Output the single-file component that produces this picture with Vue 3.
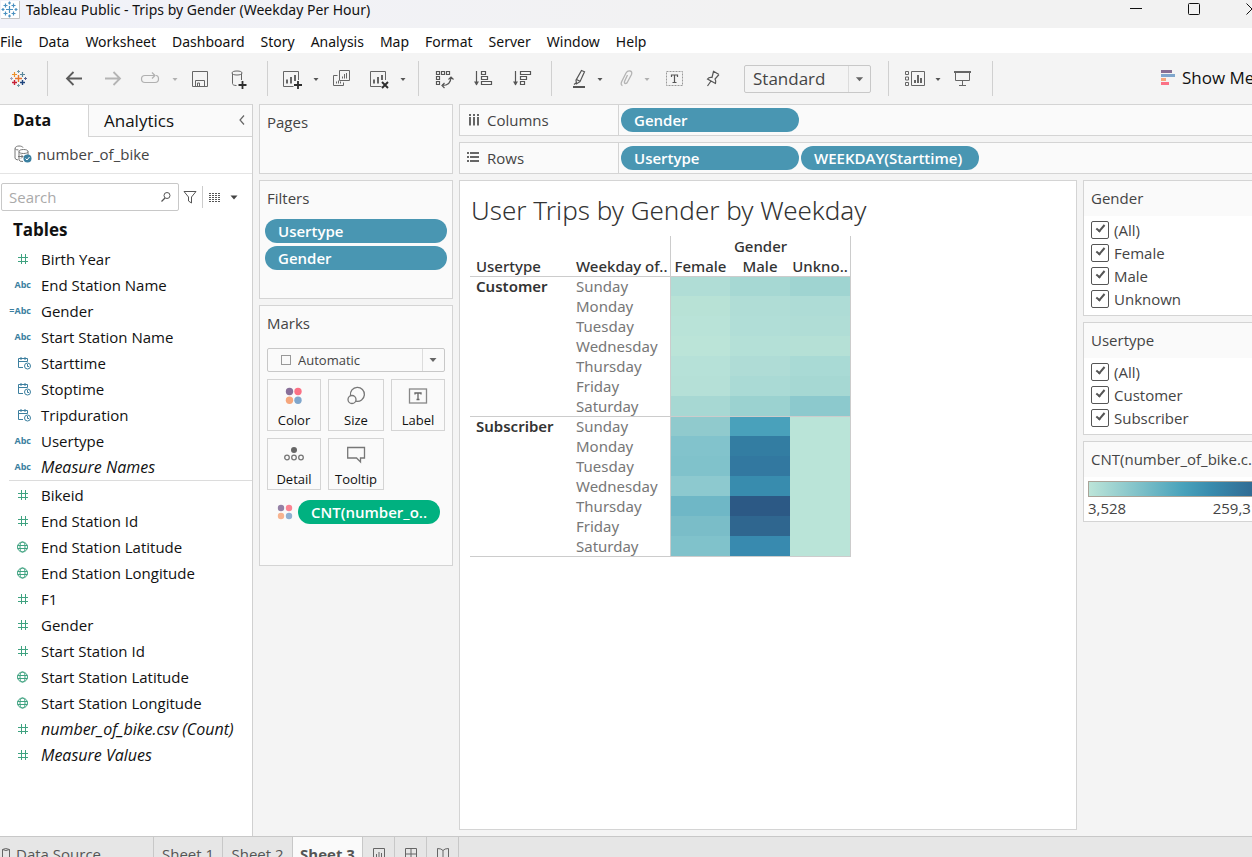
<script setup>
import { ref } from 'vue'

const menus = ['File', 'Data', 'Worksheet', 'Dashboard', 'Story', 'Analysis', 'Map', 'Format', 'Server', 'Window', 'Help']

const dimensions = [
  { name: 'Birth Year', icon: 'num' },
  { name: 'End Station Name', icon: 'abc' },
  { name: 'Gender', icon: 'calc' },
  { name: 'Start Station Name', icon: 'abc' },
  { name: 'Starttime', icon: 'date' },
  { name: 'Stoptime', icon: 'date' },
  { name: 'Tripduration', icon: 'date' },
  { name: 'Usertype', icon: 'abc' },
  { name: 'Measure Names', icon: 'abc', italic: true }
]
const measures = [
  { name: 'Bikeid', icon: 'num' },
  { name: 'End Station Id', icon: 'num' },
  { name: 'End Station Latitude', icon: 'geo' },
  { name: 'End Station Longitude', icon: 'geo' },
  { name: 'F1', icon: 'num' },
  { name: 'Gender', icon: 'num' },
  { name: 'Start Station Id', icon: 'num' },
  { name: 'Start Station Latitude', icon: 'geo' },
  { name: 'Start Station Longitude', icon: 'geo' },
  { name: 'number_of_bike.csv (Count)', icon: 'num', italic: true },
  { name: 'Measure Values', icon: 'num', italic: true }
]
const fieldGroups = [dimensions, measures]

const groups = [
  {
    name: 'Customer',
    days: [
      ['Sunday', '#b0ddd6', '#a6d8d3', '#9fd4d1'],
      ['Monday', '#b8e2d6', '#b0ddd6', '#aedcd6'],
      ['Tuesday', '#b9e3d8', '#b1ded7', '#b0ddd6'],
      ['Wednesday', '#bbe4d8', '#b4e0d7', '#b5e0d6'],
      ['Thursday', '#b6e1d8', '#afdcd6', '#a9dad5'],
      ['Friday', '#b5e0d7', '#aadad5', '#a6d8d3'],
      ['Saturday', '#a7d8d3', '#9bd2d0', '#8cc9cd']
    ]
  },
  {
    name: 'Subscriber',
    days: [
      ['Sunday', '#90cacd', '#49a1bb', '#bae4d8'],
      ['Monday', '#82c3cc', '#337da2', '#bae4d8'],
      ['Tuesday', '#80c2cb', '#3278a0', '#bae4d8'],
      ['Wednesday', '#8dc9cf', '#388cae', '#bae4d8'],
      ['Thursday', '#6fb7c6', '#2c5985', '#bae4d8'],
      ['Friday', '#7abdc8', '#2f668f', '#bae4d8'],
      ['Saturday', '#80c2cb', '#388aaf', '#bae4d8']
    ]
  }
]

const filterCards = ref([
  { title: 'Gender', items: ['(All)', 'Female', 'Male', 'Unknown'] },
  { title: 'Usertype', items: ['(All)', 'Customer', 'Subscriber'] }
])
const search = ref('')
</script>

<template>
  <div class="app">
    <header class="titlebar">
      <svg class="applogo" width="20" height="20" viewBox="0 0 20 20" aria-hidden="true">
        <rect x="1" y="1" width="18" height="17" fill="#fff" />
        <path d="M1 18.500h18.500V1" fill="none" stroke="#c4c4c4" />
        <path d="M9.500 6v7M6 9.500h7M5.500 3.500v4M3.500 5.500h4M13.500 3.500v4M11.500 5.500h4M5.500 11.500v4M3.500 13.500h4M13.500 11.500v4M11.500 13.500h4M9.500 1.500v3M8 3h3M9.500 14.500v3M8 16h3M3 8v3M1.500 9.500h3M16 8v3M14.500 9.500h3" stroke="#4a90c0" stroke-width="1.200" fill="none" />
      </svg>
      <h1>Tableau Public - Trips by Gender (Weekday Per Hour)</h1>
      <div class="wincontrols">
        <button aria-label="Minimize"><svg width="12" height="12" viewBox="0 0 12 12"><path d="M0 5.500h12" stroke="#111" /></svg></button>
        <button aria-label="Maximize"><svg width="12" height="12" viewBox="0 0 12 12"><rect x=".5" y=".5" width="11" height="11" rx="1" fill="none" stroke="#111" /></svg></button>
        <button aria-label="Close"><svg width="12" height="12" viewBox="0 0 12 12"><path d="M.5.5l11 11M11.500.5l-11 11" stroke="#111" /></svg></button>
      </div>
    </header>

    <nav class="menubar">
      <button v-for="m in menus" :key="m">{{ m }}</button>
    </nav>

    <div class="toolbar">
      <div class="tgroup tlogo">
        <button aria-label="Start page">
          <svg width="24" height="24" viewBox="0 0 24 24" fill="none">
            <path d="M11.500 8v7M8 11.500h7" stroke="#e8762c" stroke-width="1.400" />
            <path d="M7.500 5v5M5 7.500h5" stroke="#eb912b" stroke-width="1.200" />
            <path d="M15.500 5v5M13 7.500h5" stroke="#59879b" stroke-width="1.200" />
            <path d="M7.500 13v5M5 15.500h5" stroke="#c72035" stroke-width="1.400" />
            <path d="M15.500 13v5M13 15.500h5" stroke="#1f457e" stroke-width="1.400" />
            <path d="M11.500 3v3M10 4.500h3" stroke="#7199a6" />
            <path d="M11.500 17v3M10 18.500h3" stroke="#7199a6" />
            <path d="M4.500 10v3M3 11.500h3" stroke="#a0a0b8" />
            <path d="M18.500 10v3M17 11.500h3" stroke="#5b6591" />
          </svg>
        </button>
      </div>
      <div class="tgroup">
        <button aria-label="Undo"><svg width="24" height="24" viewBox="0 0 24 24"><path d="M20 11.500H5M11.500 5L5 11.500l6.500 6.500" stroke="#5c5c5c" stroke-width="1.800" /></svg></button>
        <button aria-label="Redo" disabled><svg width="24" height="24" viewBox="0 0 24 24"><path d="M4 11.500h15M12.500 5l6.500 6.500-6.500 6.500" stroke="#b4b4b4" stroke-width="1.800" /></svg></button>
        <button aria-label="Replay" disabled><svg width="24" height="24" viewBox="0 0 24 24"><path d="M7 15.500H5q-3.500 0-3.500-3.500t3.500-3.500h10M12 5.500l3 3-3 3M16 8.500q2.500 0 2.500 3.500t-3.500 3.500H7" stroke="#b0b0b0" stroke-width="1.200" /></svg></button>
        <button class="caret" aria-label="Replay options" disabled><svg width="10" height="10" viewBox="0 0 10 10"><path d="M2.500 4h5L5 7z" fill="#b0b0b0" /></svg></button>
        <button aria-label="Save"><svg width="24" height="24" viewBox="0 0 24 24"><path d="M4.500 4.500h15v15h-15zM7.500 19.500v-6h9v6M9.500 19v-3h2v3" stroke="#666" /></svg></button>
        <button aria-label="New data source"><svg width="24" height="24" viewBox="0 0 24 24"><path d="M5 6c0-1.300 2-2 5-2s5 .7 5 2-2 2-5 2-5-.7-5-2zM5.500 6.500v10c0 1.300 1.500 2 4 2M14.500 6.500V13" stroke="#666" /><path d="M15.500 14v8M11.500 18h8" stroke="#2d2d2d" stroke-width="1.800" /></svg></button>
      </div>
      <div class="tgroup g-sheet">
        <button aria-label="New worksheet"><svg width="24" height="24" viewBox="0 0 24 24"><path d="M12.500 19.500h-10v-15h15V13" stroke="#666" /><path d="M6 16.500v-4M10 16.500V10M14 14V8" stroke="#666" stroke-width="2" /><path d="M17 14v8M13 18h8" stroke="#2d2d2d" stroke-width="1.800" /></svg></button>
        <button class="caret" aria-label="New worksheet options"><svg width="10" height="10" viewBox="0 0 10 10"><path d="M2.500 4h5L5 7z" fill="#555" /></svg></button>
        <button aria-label="Duplicate sheet"><svg width="24" height="24" viewBox="0 0 24 24"><path d="M10.500 3.500h10v10h-10zM8.500 8.500h-4v10h10v-3" stroke="#666" /><path d="M13.500 11.500V9.500M15.500 11.500V7M17.500 11.500V6M7.500 16.500v-2M9.500 16.500v-3M11.500 16.500v-2" stroke="#666" /></svg></button>
        <button aria-label="Clear sheet"><svg width="24" height="24" viewBox="0 0 24 24"><path d="M13.500 19.500h-11v-15h15V13" stroke="#666" /><path d="M6 16.500v-4M10 16.500V10M14 13V8" stroke="#666" stroke-width="2" /><path d="M14 15l6 6M20 15l-6 6" stroke="#2d2d2d" stroke-width="1.900" /></svg></button>
        <button class="caret" aria-label="Clear options"><svg width="10" height="10" viewBox="0 0 10 10"><path d="M2.500 4h5L5 7z" fill="#555" /></svg></button>
      </div>
      <div class="tgroup g-sort">
        <button aria-label="Swap rows and columns"><svg width="24" height="24" viewBox="0 0 24 24"><path d="M4.500 4.500h3v3h-3zM9.500 4.500h3v3h-3zM14.500 4.500h3v3h-3zM4.500 9.500h3v3h-3zM4.500 14.500h3v3h-3zM10 18.500q9 0 9-8.500M12.500 16L10 18.500l2.500 2.500M16.500 12.500L19 10l2.500 2.500" stroke="#555" stroke-width="1.200" /></svg></button>
        <button aria-label="Sort ascending"><svg width="24" height="24" viewBox="0 0 24 24"><path d="M5.500 4v14M10.500 4.500h4v3h-4zM10.500 9.500h6v3h-6zM10.500 14.500h10v3h-10z" stroke="#555" stroke-width="1.200" /><path d="M3 14.500h5L5.500 18.500z" fill="#555" /></svg></button>
        <button aria-label="Sort descending"><svg width="24" height="24" viewBox="0 0 24 24"><path d="M5.500 4v14M10.500 4.500h10v3h-10zM10.500 9.500h6v3h-6zM10.500 14.500h4v3h-4z" stroke="#555" stroke-width="1.200" /><path d="M3 14.500h5L5.500 18.500z" fill="#555" /></svg></button>
      </div>
      <div class="tgroup g-format">
        <button aria-label="Highlight"><svg width="24" height="24" viewBox="0 0 24 24"><path d="M13.500 3.500l3 1.200-4.500 10-3.500 2-.5-3.500zM8.500 12.500l3.500 1.700M8 16l-2 1.500" stroke="#555" stroke-width="1.200" /><path d="M5 20h12" stroke="#555" stroke-width="2" /></svg></button>
        <button class="caret" aria-label="Highlight options"><svg width="10" height="10" viewBox="0 0 10 10"><path d="M2.500 4h5L5 7z" fill="#555" /></svg></button>
        <button aria-label="Group members" disabled><svg width="24" height="24" viewBox="0 0 24 24"><path d="M12.500 8l-3 6.500q-.5 2 1 2t2-1.500l4-7.500q1-3-1.500-3.500T11 6l-4.500 9q-1 3 1 3.500" stroke="#b4b4b4" stroke-width="1.300" /></svg></button>
        <button class="caret" aria-label="Group options" disabled><svg width="10" height="10" viewBox="0 0 10 10"><path d="M2.500 4h5L5 7z" fill="#b0b0b0" /></svg></button>
        <button aria-label="Show mark labels"><svg width="24" height="24" viewBox="0 0 24 24"><rect x="4.500" y="4.500" width="16" height="14" stroke="#999" stroke-dasharray="2 1" /><path d="M9.500 10V8h6v2M12.500 8v7.500M10.500 15.500h4" stroke="#555" stroke-width="1.200" /></svg></button>
        <button aria-label="Fix axes"><svg width="24" height="24" viewBox="0 0 24 24"><path d="M12 4l6 3.500M12.500 4.500l-1.500 6q-3-.5-4.500 1.500l8 4.500q1-2-.5-4.500l4-4.500M10 14l-3.500 5" stroke="#555" stroke-width="1.200" /></svg></button>
        <div class="fit">
          <select aria-label="Fit"><option>Standard</option><option>Fit Width</option><option>Entire View</option></select>
          <svg width="10" height="10" viewBox="0 0 10 10" aria-hidden="true"><path d="M1 3h8L5 7.500z" fill="#666" /></svg>
        </div>
      </div>
      <div class="tgroup g-show">
        <button aria-label="Show/hide cards"><svg width="24" height="24" viewBox="0 0 24 24"><path d="M2.500 4.500h3v3h-3zM2.500 10h3v3h-3zM2.500 15.500h3v3h-3zM8.500 4.500h13v14h-13z" stroke="#666" /><path d="M12 16v-3M15 16V8M18 16v-5" stroke="#555" stroke-width="1.800" /></svg></button>
        <button class="caret" aria-label="Card options"><svg width="10" height="10" viewBox="0 0 10 10"><path d="M2.500 4h5L5 7z" fill="#555" /></svg></button>
        <button aria-label="Presentation mode"><svg width="24" height="24" viewBox="0 0 24 24"><path d="M3 5h17" stroke="#666" stroke-width="2" /><path d="M4.500 6v7.500h14V6M11.500 13.500v5M8 18.500h7" stroke="#666" /></svg></button>
      </div>
      <button class="showme">
        <svg width="15" height="16" viewBox="0 0 15 16" aria-hidden="true"><path fill="#886f93" d="M0 0h11v3H0z" /><path fill="#7fa6cc" d="M0 4h14v3H0z" /><path fill="#f5a67c" d="M0 8h5v3H0z" /><path fill="#fb7185" d="M0 12h8v3H0z" /></svg>
        <span>Show Me</span>
      </button>
    </div>

    <main class="workspace">
      <aside class="datapane">
        <div class="panetabs">
          <button class="ptab active">Data</button>
          <button class="ptab">Analytics</button>
          <button class="collapse" aria-label="Collapse pane"><svg width="8" height="12" viewBox="0 0 8 12"><path d="M6 1.500L2 6l4 4.500" stroke="#666" stroke-width="1.200" fill="none" /></svg></button>
        </div>
        <button class="source">
          <svg width="18" height="18" viewBox="0 0 18 18" fill="none" aria-hidden="true">
            <path d="M1 3.500C1 2 3 1 5 1s4 .8 4 1.500M1 3.500V13q0 1.500 3 2M1 3.500Q2 5 4.500 5" stroke="#777" />
            <path d="M5 6.500c0-1.300 2-2 4.500-2s4.500.7 4.500 2-2 2-4.500 2-4.500-.7-4.500-2zM5 6.500V15q0 1.500 4 1.500M14 6.500V10" stroke="#777" />
            <path d="M4 11.500h5M7 9.500l2 2-2 2" stroke="#777" />
            <circle cx="13.500" cy="13.500" r="4" fill="#3a7fa0" /><path d="M11.500 13.500l1.500 1.500 2.500-3" stroke="#fff" />
          </svg>
          <span>number_of_bike</span>
        </button>
        <div class="searchrow">
          <div class="searchbox">
            <input v-model="search" type="text" placeholder="Search" aria-label="Search" />
            <svg width="12" height="12" viewBox="0 0 12 12" fill="none" stroke="#555" aria-hidden="true"><circle cx="7" cy="4.500" r="3" /><path d="M5 7L1.500 10.500" stroke-width="1.300" /></svg>
          </div>
          <button class="filterbtn" aria-label="Filter fields"><svg width="14" height="14" viewBox="0 0 14 14" fill="none" stroke="#555"><path d="M1 1.500h12L8.500 7v6l-3-2V7z" /></svg></button>
          <button class="viewbtn" aria-label="View fields">
            <svg width="13" height="11" viewBox="0 0 13 11"><path d="M0 1.500h12M0 3.500h12M0 5.500h12M0 7.500h12M0 9.500h12" stroke="#555" stroke-dasharray="2 1" /></svg>
            <svg width="8" height="5" viewBox="0 0 8 5"><path d="M.5.5h7L4 4.500z" fill="#444" /></svg>
          </button>
        </div>
        <h2>Tables</h2>
        <ul v-for="(g, gi) in fieldGroups" :key="gi" class="fields">
          <li v-for="f in g" :key="f.name">
            <button class="field" :class="{ italic: f.italic }">
              <span class="ficon" :class="f.icon" aria-hidden="true">
                <svg v-if="f.icon === 'num'" width="12" height="12" viewBox="0 0 12 12"><path d="M4.500 1v10M8.500 1v10M1 4.500h10M1 8.500h10" stroke="#3ea280" /></svg>
                <svg v-else-if="f.icon === 'geo'" width="12" height="12" viewBox="0 0 12 12" fill="none" stroke="#3ea280"><circle cx="5.500" cy="6" r="5" /><ellipse cx="5.500" cy="6" rx="2.500" ry="5" /><path d="M.5 4.500h10M.5 7.500h10" /></svg>
                <svg v-else-if="f.icon === 'date'" width="14" height="14" viewBox="0 0 14 14" fill="none" stroke="#3c7f9f"><path d="M10.500 5.500V2.500h-9v9H6M1.500 5.500h9M4 1v3M8 1v3" /><circle cx="10.500" cy="10" r="3" /><path d="M10.500 8v2.500H12" /></svg>
                <b v-else>{{ f.icon === 'calc' ? '=Abc' : 'Abc' }}</b>
              </span>
              {{ f.name }}
            </button>
          </li>
        </ul>
      </aside>

      <section class="cards">
        <div class="card pages"><h3>Pages</h3></div>
        <div class="card filters">
          <h3>Filters</h3>
          <button class="pill">Usertype</button>
          <button class="pill">Gender</button>
        </div>
        <div class="card marks">
          <h3>Marks</h3>
          <div class="marktype">
            <svg width="10" height="10" viewBox="0 0 10 10" aria-hidden="true"><rect x=".5" y=".5" width="9" height="9" fill="none" stroke="#999" /></svg>
            <select aria-label="Mark type"><option>Automatic</option><option>Bar</option><option>Line</option></select>
            <svg class="arrow" width="8" height="5" viewBox="0 0 8 5" aria-hidden="true"><path d="M.5.5h7L4 4.500z" fill="#666" /></svg>
          </div>
          <div class="markgrid">
            <button><svg width="20" height="20" viewBox="0 0 20 20"><circle cx="5.500" cy="5.500" r="3.700" fill="#886f99" /><circle cx="14" cy="5.500" r="3.700" fill="#fb7185" /><circle cx="5.500" cy="14.200" r="3.700" fill="#f5a67c" /><circle cx="14" cy="14.200" r="3.700" fill="#7fa6cc" /></svg>Color</button>
            <button><svg width="20" height="20" viewBox="0 0 20 20" fill="none" stroke="#777" stroke-width="1.300"><path d="M4.500 9.500a7 7 0 1 1 5.500 5.700" /><circle cx="6" cy="13.500" r="4" /></svg>Size</button>
            <button><svg width="20" height="20" viewBox="0 0 20 20" fill="none"><rect x="1.500" y="3" width="17" height="14" stroke="#888" stroke-width="1.300" /><path d="M7 8.500V7h6v1.500M10 7v6.500M8.500 13.500h3" stroke="#666" stroke-width="1.300" /></svg>Label</button>
            <button><svg width="20" height="20" viewBox="0 0 20 20" fill="none" stroke="#777" stroke-width="1.300"><circle cx="10" cy="5" r="3" fill="#666" stroke="none" /><circle cx="3" cy="12.500" r="2.300" /><circle cx="10" cy="12.500" r="2.300" /><circle cx="17" cy="12.500" r="2.300" /></svg>Detail</button>
            <button><svg width="20" height="20" viewBox="0 0 20 20" fill="none" stroke="#777" stroke-width="1.300"><path d="M1.700 2.500h16.800v10.500H14.500v4l-4-4H1.700z" /></svg>Tooltip</button>
          </div>
          <div class="encoding">
            <svg width="16" height="16" viewBox="0 0 16 16" aria-hidden="true"><circle cx="4" cy="4" r="3.200" fill="#9480a5" /><circle cx="12" cy="4" r="3.200" fill="#fb8392" /><circle cx="4" cy="12" r="3.200" fill="#f7b38f" /><circle cx="12" cy="12" r="3.200" fill="#90b0d2" /></svg>
            <button class="pill green">CNT(number_o..</button>
          </div>
        </div>
      </section>

      <section class="content">
        <div class="shelf">
          <div class="shelfname">
            <svg width="14" height="14" viewBox="0 0 14 14" aria-hidden="true"><path d="M3 1v2M7 1v2M11 1v2M3 4v8.500M7 4v8.500M11 4v8.500" stroke="#666" stroke-width="2" /></svg>Columns
          </div>
          <button class="pill">Gender</button>
        </div>
        <div class="shelf">
          <div class="shelfname">
            <svg width="14" height="14" viewBox="0 0 14 14" aria-hidden="true"><path d="M0 2h2M0 6h2M0 10h2M3 2h9M3 6h9M3 10h9" stroke="#666" stroke-width="2" /></svg>Rows
          </div>
          <button class="pill">Usertype</button>
          <button class="pill">WEEKDAY(Starttime)</button>
        </div>
        <div class="viewrow">
          <article class="view">
            <h2 class="viztitle">User Trips by Gender by Weekday</h2>
            <table>
              <colgroup><col class="wide" /><col class="wide" /><col span="2" class="narrow" /><col class="rest" /></colgroup>
              <thead>
                <tr><th colspan="2"></th><th colspan="3" class="mid first last">Gender</th></tr>
                <tr><th>Usertype</th><th>Weekday of..</th><th class="mid first">Female</th><th class="mid">Male</th><th class="mid last">Unkno..</th></tr>
              </thead>
              <tbody v-for="g in groups" :key="g.name">
                <tr v-for="(d, i) in g.days" :key="d[0]">
                  <th v-if="i === 0" :rowspan="g.days.length" scope="rowgroup" class="group">{{ g.name }}</th>
                  <td class="day">{{ d[0] }}</td>
                  <td v-for="c in 3" :key="c" :class="{ first: c === 1, last: c === 3 }" :style="{ backgroundColor: d[c] }"></td>
                </tr>
              </tbody>
            </table>
          </article>
          <aside class="side">
            <fieldset v-for="card in filterCards" :key="card.title" class="sidecard">
              <legend class="sidetitle">{{ card.title }}</legend>
              <div class="checks">
                <label v-for="item in card.items" :key="item"><input type="checkbox" checked />{{ item }}</label>
              </div>
            </fieldset>
            <div class="sidecard">
              <div class="sidetitle">CNT(number_of_bike.c..</div>
              <div class="ramp"></div>
              <div class="range"><span>3,528</span><span>259,315</span></div>
            </div>
          </aside>
        </div>
      </section>
    </main>

    <footer class="sheets">
      <button class="dsource"><svg width="11" height="14" viewBox="0 0 11 14" fill="none" stroke="#666"><path d="M2.500 2.500q3-2 7 0v9q-3.500 2-7 0zM2.500 2.500q3.500 2 7 0" /></svg>Data Source</button>
      <button class="sheet1">Sheet 1</button>
      <button>Sheet 2</button>
      <button class="current">Sheet 3</button>
      <button class="new" aria-label="New worksheet"><svg width="14" height="14" viewBox="0 0 14 14" fill="none" stroke="#666"><path d="M1.500 1.500h11v11h-11zM4.500 10V7M7 10V5M9.500 10V6" /></svg></button>
      <button class="new" aria-label="New dashboard"><svg width="14" height="14" viewBox="0 0 14 14" fill="none" stroke="#666"><path d="M1.500 1.500h11v11h-11zM7 1.500v11M1.500 7h11" /></svg></button>
      <button class="new" aria-label="New story"><svg width="14" height="14" viewBox="0 0 14 14" fill="none" stroke="#666"><path d="M1.500 1.500q4 0 5.500 2 1.500-2 5.500-2v10q-4 0-5.500 1.500-1.500-1.500-5.500-1.500zM7 3.500v9" /></svg></button>
    </footer>
  </div>
</template>

<style>
body { margin: 0; }
</style>

<style scoped>
* { box-sizing: border-box; }
.app {
  display: flex;
  flex-direction: column;
  height: 100vh;
  overflow: hidden;
  background: #f4f4f4;
  color: #111;
  font-family: "Open Sans", "Noto Sans", sans-serif;
  font-size: 15px;
  line-height: 20px;
}
button {
  margin: 0;
  padding: 0;
  border: 0;
  background: none;
  color: inherit;
  font: inherit;
  text-align: left;
  white-space: nowrap;
}
h1, h2, h3, ul, fieldset, legend { margin: 0; padding: 0; }
svg { display: block; flex: none; }

.titlebar {
  flex: none;
  display: flex;
  align-items: flex-start;
  height: 28px;
  background: linear-gradient(90deg, #f1f2f9, #f2f2f2 60%);
}
.applogo { margin-right: 6px; }
.titlebar h1 {
  font: 400 14px/20px "Noto Sans", sans-serif;
  white-space: nowrap;
}
.wincontrols {
  display: flex;
  gap: 46px;
  margin-left: auto;
  margin-right: -6px;
  padding-top: 3px;
}

.menubar {
  flex: none;
  display: flex;
  gap: 16px;
  height: 25px;
  padding-top: 1px;
  background: #fff;
  font-size: 14px;
  line-height: 26px;
  font-family: "Noto Sans", sans-serif;
}

.toolbar {
  flex: none;
  display: flex;
  align-items: center;
  height: 51px;
  overflow: hidden;
}
.tgroup {
  flex: none;
  display: flex;
  align-items: center;
  gap: 15px;
  height: 35px;
  padding: 0 16px 0 14px;
  border-right: 1px solid #d0d0d0;
}
.tgroup svg { fill: none; }
.tlogo { padding: 0 16px 0 7px; }
.g-sheet { padding: 0 17px 0 13px; }
.g-sort { padding: 0 17px 0 13px; }
.g-format { padding: 0 17px 0 16px; }
.g-show { padding: 0 17px 0 14px; }
.caret { margin: 0 -7px 0 -9px; }
.g-format .caret { margin: 0 -5px 0 -12px; }
.fit {
  position: relative;
  width: 127px;
  height: 28px;
  margin-left: 4px;
  border: 1px solid #c8c8c8;
  border-radius: 2px;
}
.fit select, .marktype select {
  width: 100%;
  height: 100%;
  padding: 0 0 0 8px;
  border: 0;
  background: none;
  appearance: none;
  color: #444;
  font: 400 17px/24px "Open Sans", sans-serif;
}
.fit svg {
  position: absolute;
  top: 0;
  right: 0;
  width: 22px;
  height: 26px;
  padding: 8px 6px;
  border-left: 1px solid #dcdcdc;
  pointer-events: none;
}
.showme {
  flex: none;
  display: flex;
  align-items: center;
  gap: 6px;
  width: 91px;
  margin-left: auto;
  padding-bottom: 2px;
  font-size: 17px;
}

.workspace {
  flex: 1;
  display: flex;
  min-height: 0;
}
.datapane {
  flex: none;
  width: 253px;
  border-top: 1px solid #d4d4d4;
  border-right: 1px solid #d0d0d0;
  background: #fff;
}
.panetabs { display: flex; height: 32px; }
.ptab {
  flex: 1;
  padding-left: 15px;
  border-bottom: 1px solid #d4d4d4;
  background: #fafafa;
  font-size: 17px;
}
.ptab.active {
  flex: none;
  width: 89px;
  padding: 0 0 2px 13px;
  border-right: 1px solid #d4d4d4;
  border-bottom: 0;
  background: #fff;
  font-size: 16px;
  font-weight: 700;
}
.collapse {
  width: 16px;
  padding: 0 0 2px 2px;
  border-bottom: 1px solid #d4d4d4;
  background: #fafafa;
}
.source {
  display: flex;
  align-items: center;
  gap: 5px;
  width: 100%;
  height: 37px;
  padding: 0 0 2px 14px;
  border-bottom: 1px solid #e4e4e4;
  color: #444;
}
.searchrow {
  display: flex;
  align-items: center;
  height: 46px;
  padding-left: 1px;
}
.searchbox {
  display: flex;
  align-items: center;
  width: 178px;
  height: 28px;
  padding-right: 6px;
  border: 1px solid #c8c8c8;
  border-radius: 2px;
}
.searchbox input {
  flex: 1;
  min-width: 0;
  padding: 0 7px;
  border: 0;
  outline: 0;
  background: none;
  font: inherit;
}
.searchbox input::placeholder { color: #aaa; }
.filterbtn { padding: 0 5px 0 4px; }
.viewbtn {
  display: flex;
  align-items: center;
  gap: 8px;
  height: 22px;
  padding-left: 6px;
  border-left: 1px solid #ccc;
}
.datapane h2 {
  padding: 0 13px 6px;
  font-size: 17px;
  line-height: 20px;
}
.fields { list-style: none; }
.fields + .fields {
  margin-left: 9px;
  padding-top: 1px;
  border-top: 1px solid #dcdcdc;
}
.field {
  display: flex;
  align-items: center;
  width: 100%;
  height: 26px;
}
.italic { font-size: 16px; font-style: italic; }
.ficon {
  display: flex;
  justify-content: flex-end;
  width: 32px;
  margin-right: 9px;
  padding-right: 3px;
  font-style: normal;
}
.ficon.abc, .ficon.calc, .ficon.date { padding-right: 1px; }
.ficon b { color: #3c7f9f; font: 700 9px/12px "Open Sans", sans-serif; }
.fields + .fields .ficon { width: 23px; }

.cards {
  flex: none;
  display: flex;
  flex-direction: column;
  gap: 6px;
  width: 194px;
  margin-left: 6px;
}
.card {
  border: 1px solid #d4d4d4;
  background: #fafafa;
}
.card h3, .sidetitle {
  padding-left: 7px;
  color: #444;
  font-size: 15px;
  font-weight: 400;
  line-height: 34px;
}
.card h3 { height: 36px; }
.pages { height: 70px; }
.filters { height: 119px; }
.marks { height: 261px; }
.pill {
  display: block;
  flex: none;
  width: 178px;
  height: 24px;
  padding-left: 13px;
  border-radius: 12px;
  background: #4996b2;
  color: #fff;
  font-weight: 600;
}
.filters .pill { width: 182px; margin: 2px 5px 3px; }
.pill.green { width: 142px; background: #00b180; }
.marktype {
  position: relative;
  width: 178px;
  height: 24px;
  margin: 6px 7px 7px;
  border: 1px solid #c8c8c8;
  border-radius: 2px;
}
.marktype select {
  padding-left: 30px;
  font-size: 13px;
  line-height: 20px;
}
.marktype svg {
  position: absolute;
  top: 6px;
  left: 13px;
  pointer-events: none;
}
.marktype .arrow {
  top: 0;
  right: 0;
  left: auto;
  width: 22px;
  height: 22px;
  padding: 8px 7px 8px 6px;
  border-left: 1px solid #dcdcdc;
}
.markgrid {
  display: grid;
  grid-template-columns: 54px 56px 54px;
  grid-auto-rows: 52px;
  gap: 7px;
  margin: 0 7px;
}
.markgrid button {
  display: flex;
  flex-direction: column;
  align-items: center;
  padding-top: 6px;
  gap: 5px;
  border: 1px solid #d4d4d4;
  font-size: 13px;
  line-height: 18px;
}
.encoding {
  display: flex;
  align-items: center;
  gap: 5px;
  margin: 10px 0 0 17px;
}

.content {
  flex: 1;
  display: flex;
  flex-direction: column;
  gap: 6px;
  min-width: 0;
  margin-left: 6px;
}
.shelf {
  flex: none;
  display: flex;
  align-items: center;
  gap: 2px;
  height: 32px;
  border: 1px solid #d4d4d4;
  border-right: 0;
  background: #fafafa;
}
.shelfname {
  display: flex;
  align-items: center;
  align-self: stretch;
  gap: 6px;
  width: 159px;
  padding-left: 7px;
  border-right: 1px solid #d4d4d4;
  color: #444;
}
.viewrow {
  flex: 1;
  display: flex;
  gap: 6px;
  min-height: 0;
}
.view {
  flex: 1;
  margin-bottom: 6px;
  padding: 9px 10px;
  border: 1px solid #d4d4d4;
  background: #fff;
  font-family: "Noto Sans", sans-serif;
}
.viztitle {
  padding: 0 0 6px 1px;
  color: #333;
  font-size: 26px;
  font-weight: 300;
  line-height: 40px;
}
table {
  width: 381px;
  table-layout: fixed;
  border-collapse: separate;
  border-spacing: 0;
  border-bottom: 1px solid #ccc;
}
.wide { width: 100px; }
.narrow { width: 60px; }
.rest { width: 61px; }
th, td { height: 20px; padding: 0; line-height: 19px; white-space: nowrap; }
th { padding-left: 6px; color: #333; font-size: 15px; font-weight: 500; text-align: left; }
th.mid { padding: 0; text-align: center; }
th.group { font-weight: 600; vertical-align: top; }
.day { padding-left: 6px; color: #777; font-size: 15px; font-weight: 400; }
.first { border-left: 1px solid #ccc; }
.last { border-right: 1px solid #ccc; }
tbody tr:first-child > * { border-top: 1px solid #ccc; }

.side {
  flex: none;
  display: flex;
  flex-direction: column;
  gap: 6px;
  width: 169px;
  overflow: hidden;
}
.sidecard {
  flex: none;
  min-width: 0;
  border: 1px solid #d4d4d4;
  border-right: 0;
  background: #fff;
}
.sidetitle {
  float: left;
  width: 100%;
  background: #fafafa;
  white-space: nowrap;
  line-height: 35px;
}
.checks { clear: both; padding: 2px 7px 5px; }
.checks label {
  display: flex;
  align-items: center;
  gap: 5px;
  height: 23px;
  color: #444;
}
.checks input {
  display: grid;
  place-items: center;
  width: 18px;
  height: 18px;
  margin: 0;
  border: 1px solid #555;
  border-radius: 2px;
  appearance: none;
}
.checks input:checked::after {
  content: "";
  width: 3px;
  height: 7px;
  margin-bottom: 4px;
  border: solid #555;
  border-width: 0 2px 2px 0;
  transform: rotate(40deg);
}
.ramp {
  clear: both;
  width: 190px;
  height: 16px;
  margin-left: 4px;
  border: 1px solid #aaa398;
  background: linear-gradient(90deg, #bce4d8, #49a2bb 50%, #388bad 65%, #2c5985);
}
.sidetitle + .ramp { position: relative; top: 4px; }
.range {
  display: flex;
  justify-content: space-between;
  width: 184px;
  padding: 5px 0 3px 4px;
  color: #444;
  line-height: 20px;
}

.sheets {
  flex: none;
  display: flex;
  height: 21px;
  overflow: hidden;
  border-top: 1px solid #c8c8c8;
  background: #e6e6e6;
  color: #555;
}
.sheets button {
  display: flex;
  align-items: center;
  justify-content: center;
  width: 70px;
  height: 33px;
  border-right: 1px solid #c8c8c8;
}
.sheets .dsource { justify-content: flex-start; gap: 5px; width: 154px; }
.sheets .sheet1 { width: 69px; }
.sheets .current { background: #fafafa; font-weight: 700; }
.sheets .new { width: 32px; }
</style>
